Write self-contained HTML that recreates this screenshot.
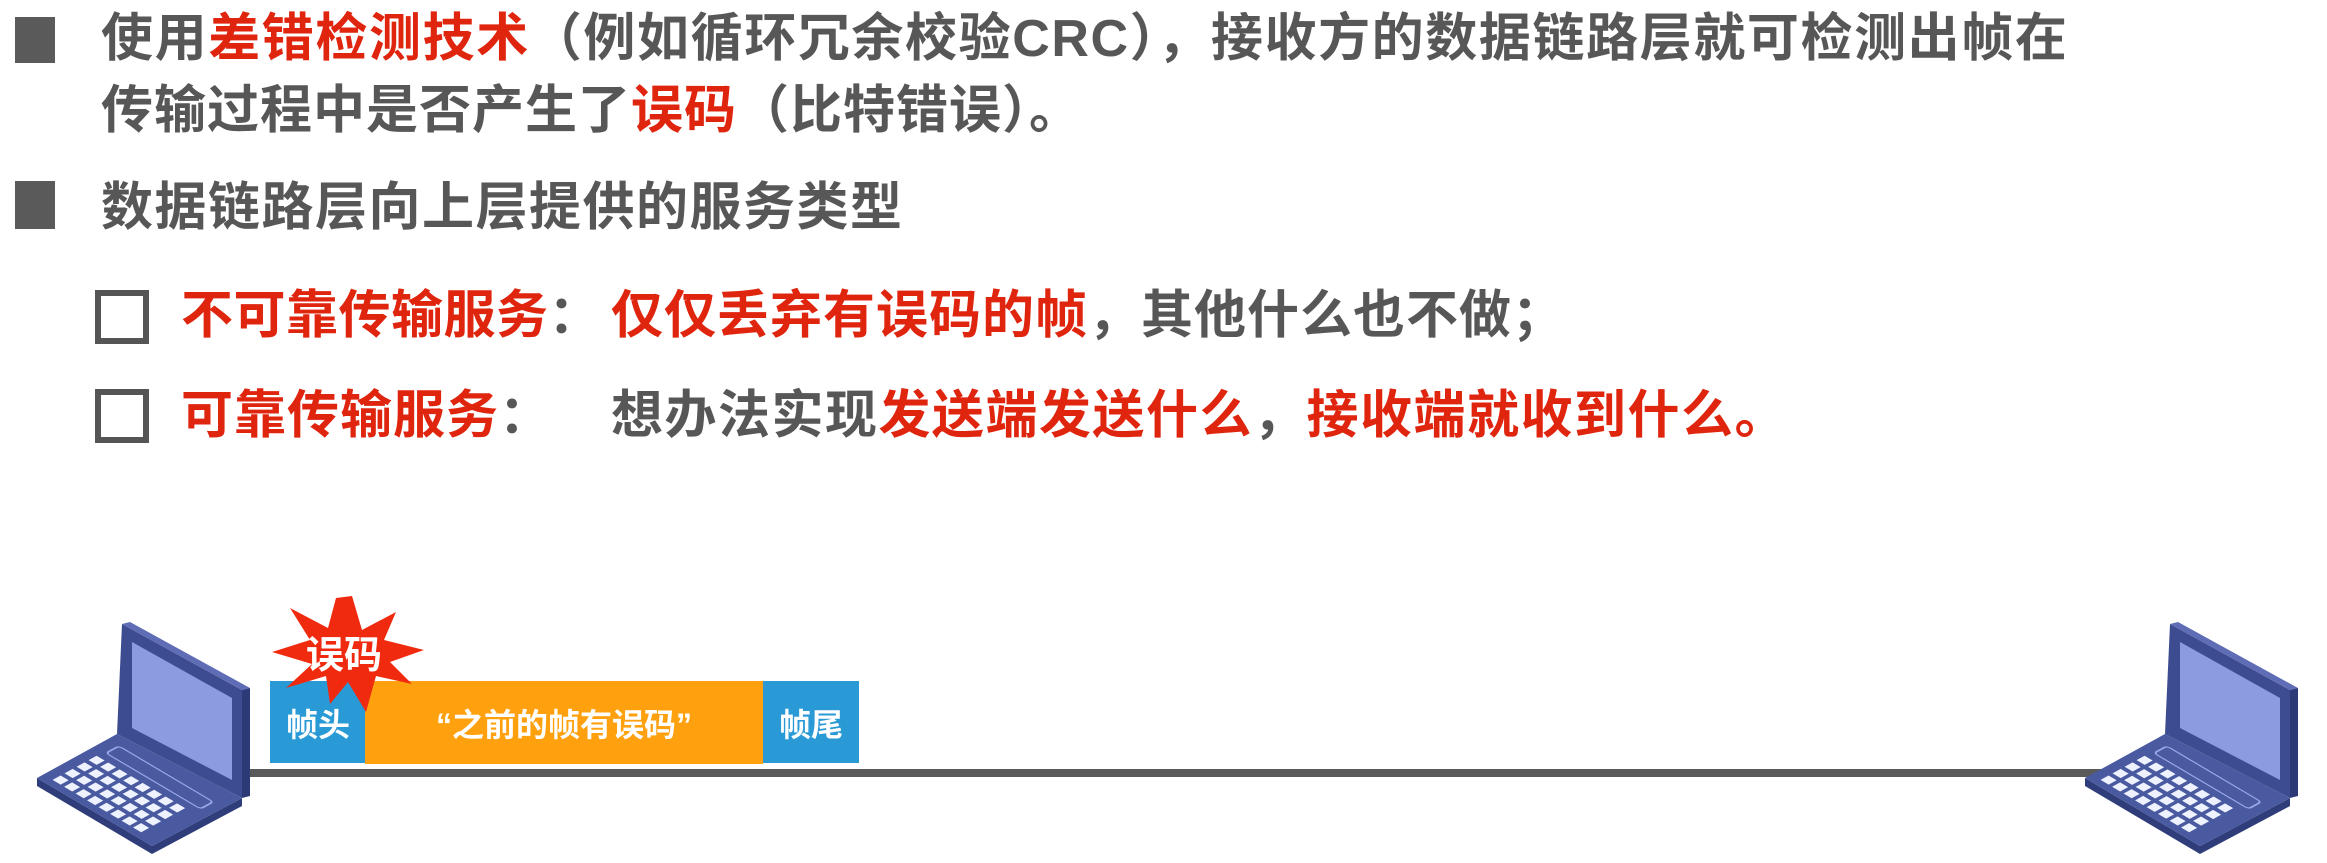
<!DOCTYPE html>
<html><head><meta charset="utf-8"><style>
html,body{margin:0;padding:0;background:#fff;width:2327px;height:863px;overflow:hidden;position:relative}
.t{position:absolute;font-family:"Liberation Sans","Noto Sans CJK SC",sans-serif;font-weight:bold;font-size:52px;line-height:52px;color:#575757;letter-spacing:1px;white-space:nowrap}
.r{color:#e0250f}
.sq{position:absolute;background:#5a5a5a}
.cb{position:absolute;border:6px solid #555;box-sizing:border-box}
</style></head><body>
<div class="sq" style="left:15px;top:17px;width:40px;height:46px"></div>
<div class="sq" style="left:15px;top:181px;width:40px;height:48px"></div>
<div class="t" style="left:101px;top:13px;letter-spacing:1.6px">使用<span class="r">差错检测技术</span>（例如循环冗余校验CRC），接收方的数据链路层就可检测出帧在</div>
<div class="t" style="left:101px;top:85px">传输过程中是否产生了<span class="r">误码</span>（比特错误）。</div>
<div class="t" style="left:101px;top:182px;letter-spacing:1.5px">数据链路层向上层提供的服务类型</div>
<div class="cb" style="left:95px;top:290px;width:54px;height:54px"></div>
<div class="cb" style="left:95px;top:389px;width:54px;height:54px"></div>
<div class="t r" style="left:181px;top:290px;letter-spacing:0.5px">不可靠传输服务<span style="color:#575757">：</span></div>
<div class="t" style="left:611px;top:290px"><span class="r">仅仅丢弃有误码的帧</span>，其他什么也不做；</div>
<div class="t r" style="left:181px;top:390px">可靠传输服务<span style="color:#575757">：</span></div>
<div class="t" style="left:611px;top:390px;letter-spacing:1.5px">想办法实现<span class="r">发送端发送什么</span>，<span class="r">接收端就收到什么。</span></div>

<svg width="2327" height="863" style="position:absolute;left:0;top:0" xmlns="http://www.w3.org/2000/svg">
<defs>
<g id="lap">
 <polygon points="0,166 115,234 205,186 205,178 115,226 0,158" fill="#2f3d7a"/>
 <polygon points="0,158 80,114 205,178 115,226" fill="#4a5aa0"/>
 <polygon points="80,114 85,4 205,70 205,178" fill="#3d4c90"/>
 <polygon points="85,4 93,2 213,68 205,70" fill="#5e6db5"/>
 <polygon points="205,70 213,68 213,176 205,178" fill="#2c3a78"/>
 <polygon points="95,22 195,78 195,160 95,108" fill="#8c9be0"/>
 <g transform="matrix(1.15,0.68,0.8,-0.44,0,158)">
  <rect x="10" y="72" width="82" height="16" rx="3" fill="none" stroke="#9aa8e8" stroke-width="1.5"/>
  <g fill="#eef2ff">
   <rect x="8" y="8" width="7" height="10"/><rect x="18" y="8" width="7" height="10"/><rect x="28" y="8" width="7" height="10"/><rect x="38" y="8" width="7" height="10"/><rect x="48" y="8" width="7" height="10"/><rect x="58" y="8" width="7" height="10"/><rect x="68" y="8" width="7" height="10"/><rect x="78" y="8" width="7" height="10"/>
   <rect x="8" y="23" width="7" height="10"/><rect x="18" y="23" width="7" height="10"/><rect x="28" y="23" width="7" height="10"/><rect x="38" y="23" width="7" height="10"/><rect x="48" y="23" width="7" height="10"/><rect x="58" y="23" width="7" height="10"/><rect x="68" y="23" width="7" height="10"/><rect x="78" y="23" width="7" height="10"/>
   <rect x="8" y="38" width="7" height="10"/><rect x="18" y="38" width="7" height="10"/><rect x="28" y="38" width="7" height="10"/><rect x="38" y="38" width="7" height="10"/><rect x="48" y="38" width="7" height="10"/><rect x="58" y="38" width="7" height="10"/><rect x="68" y="38" width="7" height="10"/><rect x="78" y="38" width="7" height="10"/>
   <rect x="8" y="53" width="7" height="10"/><rect x="18" y="53" width="7" height="10"/><rect x="28" y="53" width="7" height="10"/><rect x="38" y="53" width="7" height="10"/><rect x="48" y="53" width="7" height="10"/><rect x="58" y="53" width="7" height="10"/><rect x="68" y="53" width="7" height="10"/><rect x="78" y="53" width="7" height="10"/>
  </g>
 </g>
</g>
</defs>
<rect x="237" y="769" width="1870" height="8" fill="#5a5a5a"/>
<use href="#lap" x="37" y="620"/>
<use href="#lap" x="2085" y="620"/>
<rect x="270" y="681" width="96" height="82" fill="#2a9ad6"/>
<rect x="365" y="681" width="398" height="83" fill="#ffa10f"/>
<rect x="763" y="681" width="96" height="82" fill="#2a9ad6"/>
<polygon points="352,596 362,630 396,612 384,640 424,650 390,662 412,684 376,676 366,712 348,682 330,704 326,676 286,688 312,664 272,652 310,640 290,608 328,628 336,598" fill="#f02a0e"/>
<g font-family="Liberation Sans,Noto Sans CJK SC,sans-serif" font-weight="bold" fill="#fff">
<text x="344" y="668" font-size="38" text-anchor="middle">误码</text>
<text x="318" y="736" font-size="32" text-anchor="middle">帧头</text>
<text x="564" y="736" font-size="32" text-anchor="middle">“之前的帧有误码”</text>
<text x="811" y="736" font-size="32" text-anchor="middle">帧尾</text>
</g>
</svg>
</body></html>
